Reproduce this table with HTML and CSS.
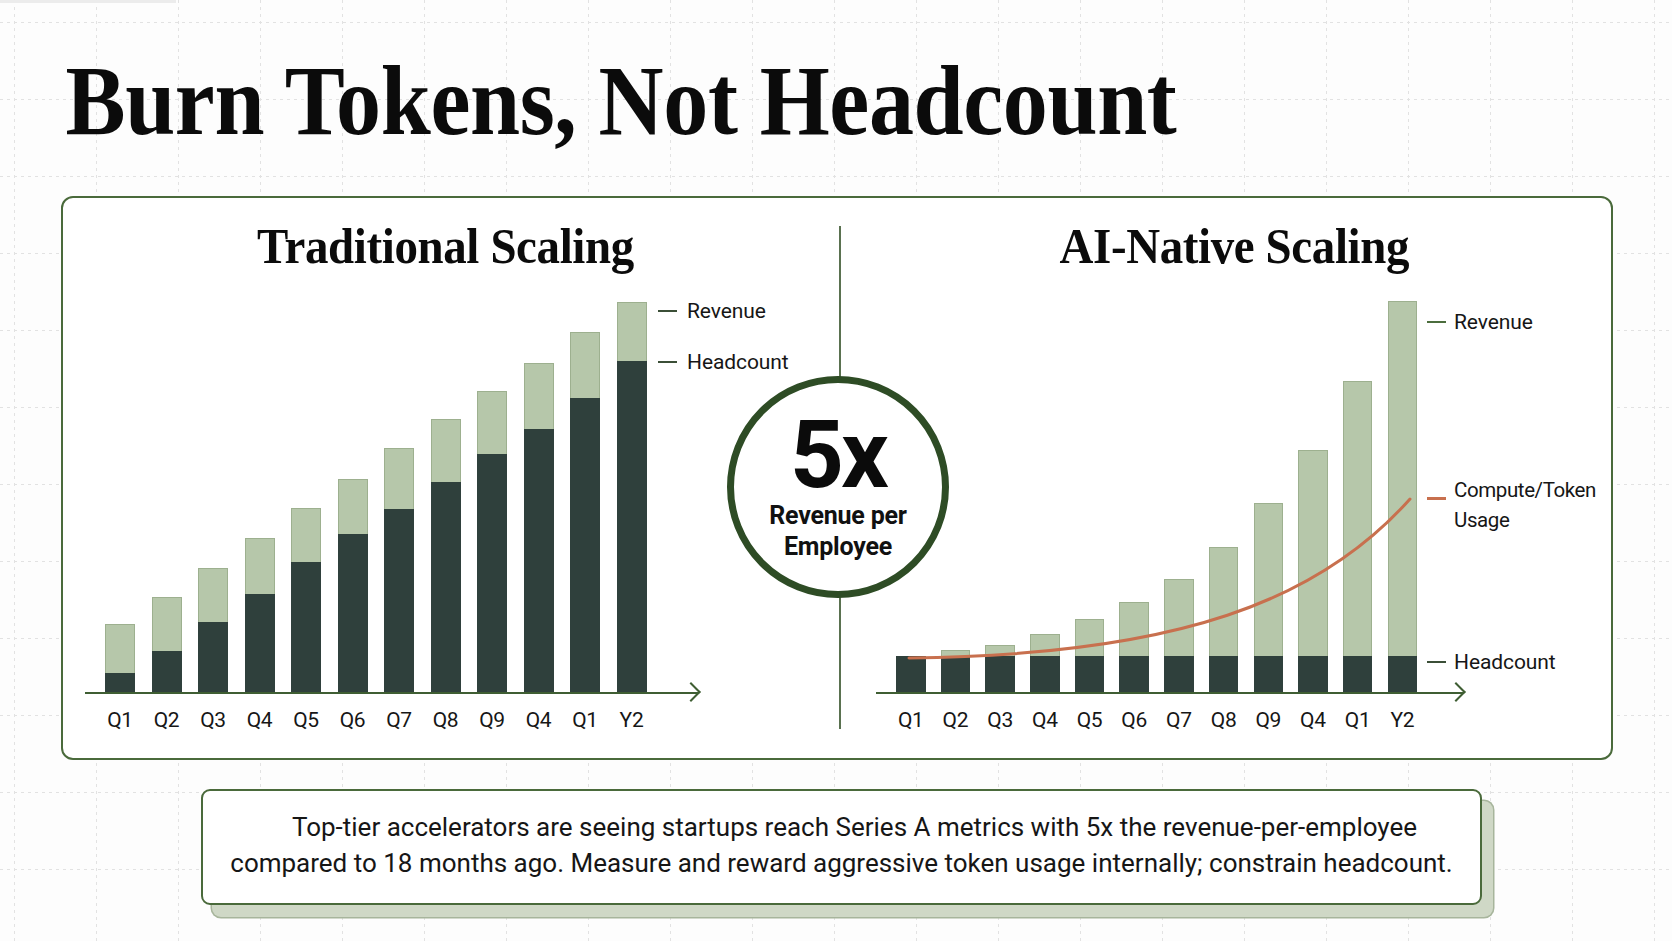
FILE: index.html
```html
<!DOCTYPE html>
<html lang="en">
<head>
<meta charset="utf-8">
<title>Burn Tokens, Not Headcount</title>
<link rel="stylesheet" href="styles.css">
</head>
<body>
<div class="slide">
  <div class="corner"></div>
  <h1 class="title">Burn Tokens, Not Headcount</h1>

  <section class="card">
    <div class="panel panel-left">
      <h2 class="heading">Traditional Scaling</h2>
      <div class="plot">
        <div class="bar" style="height:68px"><div class="bar-dark" style="height:19px"></div></div>
        <div class="bar" style="height:95px"><div class="bar-dark" style="height:41px"></div></div>
        <div class="bar" style="height:124px"><div class="bar-dark" style="height:70px"></div></div>
        <div class="bar" style="height:154px"><div class="bar-dark" style="height:98px"></div></div>
        <div class="bar" style="height:184px"><div class="bar-dark" style="height:130px"></div></div>
        <div class="bar" style="height:213px"><div class="bar-dark" style="height:158px"></div></div>
        <div class="bar" style="height:244px"><div class="bar-dark" style="height:183px"></div></div>
        <div class="bar" style="height:273px"><div class="bar-dark" style="height:210px"></div></div>
        <div class="bar" style="height:301px"><div class="bar-dark" style="height:238px"></div></div>
        <div class="bar" style="height:329px"><div class="bar-dark" style="height:263px"></div></div>
        <div class="bar" style="height:360px"><div class="bar-dark" style="height:294px"></div></div>
        <div class="bar" style="height:390px"><div class="bar-dark" style="height:331px"></div></div>
        <div class="legend-item" style="bottom:368px"><span class="dash"></span><span>Revenue</span></div>
        <div class="legend-item" style="bottom:317px"><span class="dash"></span><span>Headcount</span></div>
      </div>
      <div class="labels">
        <span>Q1</span><span>Q2</span><span>Q3</span><span>Q4</span><span>Q5</span><span>Q6</span>
        <span>Q7</span><span>Q8</span><span>Q9</span><span>Q4</span><span>Q1</span><span>Y2</span>
      </div>
    </div>

    <div class="divider"></div>

    <div class="panel panel-right">
      <h2 class="heading">AI-Native Scaling</h2>
      <div class="plot">
        <div class="bar" style="height:36px"><div class="bar-dark" style="height:36px"></div></div>
        <div class="bar" style="height:42px"><div class="bar-dark" style="height:36px"></div></div>
        <div class="bar" style="height:47px"><div class="bar-dark" style="height:36px"></div></div>
        <div class="bar" style="height:58px"><div class="bar-dark" style="height:36px"></div></div>
        <div class="bar" style="height:73px"><div class="bar-dark" style="height:36px"></div></div>
        <div class="bar" style="height:90px"><div class="bar-dark" style="height:36px"></div></div>
        <div class="bar" style="height:113px"><div class="bar-dark" style="height:36px"></div></div>
        <div class="bar" style="height:145px"><div class="bar-dark" style="height:36px"></div></div>
        <div class="bar" style="height:189px"><div class="bar-dark" style="height:36px"></div></div>
        <div class="bar" style="height:242px"><div class="bar-dark" style="height:36px"></div></div>
        <div class="bar" style="height:311px"><div class="bar-dark" style="height:36px"></div></div>
        <div class="bar" style="height:391px"><div class="bar-dark" style="height:36px"></div></div>
        <svg class="curve" viewBox="0 0 588 416" width="588" height="416" aria-hidden="true">
          <path d="M33 382 C304 379 444 324 534 223" fill="none" stroke="#c8704e" stroke-width="3" stroke-linecap="round"/>
        </svg>
        <div class="legend-item" style="bottom:357px"><span class="dash dash-green"></span><span>Revenue</span></div>
        <div class="legend-item legend-multi" style="bottom:157px"><span class="dash dash-orange"></span><span>Compute/Token<br>Usage</span></div>
        <div class="legend-item" style="bottom:17px"><span class="dash"></span><span>Headcount</span></div>
      </div>
      <div class="labels">
        <span>Q1</span><span>Q2</span><span>Q3</span><span>Q4</span><span>Q5</span><span>Q6</span>
        <span>Q7</span><span>Q8</span><span>Q9</span><span>Q4</span><span>Q1</span><span>Y2</span>
      </div>
    </div>

    <div class="badge">
      <div class="badge-num">5x</div>
      <div class="badge-text">Revenue per<br>Employee</div>
    </div>
  </section>

  <div class="note">
    <p>Top-tier accelerators are seeing startups reach Series A metrics with 5x the revenue-per-employee<br>compared to 18 months ago. Measure and reward aggressive token usage internally; constrain headcount.</p>
  </div>
</div>
</body>
</html>
```

FILE: styles.css
```css
* { box-sizing: border-box; }

html, body {
  margin: 0;
  padding: 0;
  background: #fdfdfd;
}

body {
  width: 1672px;
  height: 941px;
  overflow: hidden;
  font-family: Roboto, "Liberation Sans", Arial, sans-serif;
  color: #141414;
}

.slide {
  position: relative;
  width: 1672px;
  height: 941px;
  padding: 51px 0 0 61px;
}

.slide::before,
.slide::after {
  content: "";
  position: absolute;
  inset: 0;
  pointer-events: none;
}

.slide::before {
  background-image: linear-gradient(to right, #e2e2e2 1px, transparent 1px);
  background-size: 82px 100%;
  background-position: 14px 0;
  -webkit-mask-image: repeating-linear-gradient(to bottom, #000 0 3px, transparent 3px 7px);
  mask-image: repeating-linear-gradient(to bottom, #000 0 3px, transparent 3px 7px);
}

.slide::after {
  background-image: linear-gradient(to bottom, #e2e2e2 1px, transparent 1px);
  background-size: 100% 77px;
  background-position: 0 22px;
  -webkit-mask-image: repeating-linear-gradient(to right, #000 0 3px, transparent 3px 7px);
  mask-image: repeating-linear-gradient(to right, #000 0 3px, transparent 3px 7px);
}

.slide > * {
  position: relative;
  z-index: 1;
}

.corner {
  position: absolute;
  left: 0;
  top: 0;
  width: 176px;
  height: 3px;
  background: #ececec;
}

.title {
  margin: 0;
  padding-left: 5px;
  font-family: "Liberation Serif", "Times New Roman", serif;
  font-weight: 700;
  font-size: 100px;
  line-height: 100px;
  letter-spacing: -0.4px;
  color: #0b0b0b;
  transform: scaleX(0.9);
  transform-origin: 0 50%;
  white-space: nowrap;
}

/* ---------- main card ---------- */
.card {
  position: relative;
  margin-top: 45px;
  width: 1552px;
  height: 564px;
  border: 2px solid #4a6a3b;
  border-radius: 12px;
  background: #ffffff;
  display: flex;
}

.panel {
  display: flex;
  flex-direction: column;
}

.panel-left {
  width: 776px;
  padding-left: 21.5px;
}

.panel-right {
  flex: 1;
  padding-left: 35px;
}

.divider {
  width: 2px;
  margin: 28px 0 29px;
  background: #5a7150;
}

.heading {
  margin: 0;
  padding-top: 18px;
  font-family: "Liberation Serif", "Times New Roman", serif;
  font-weight: 700;
  font-size: 51px;
  line-height: 60px;
  letter-spacing: -0.4px;
  text-align: center;
  color: #0b0b0b;
  transform: scaleX(0.92);
}

.panel-left .heading {
  margin-left: -21.5px;
  padding-right: 12px;
}

.panel-right .heading {
  margin-left: -35px;
  padding-left: 18px;
}

/* ---------- plots ---------- */
.plot {
  position: relative;
  height: 418px;
  display: flex;
  align-items: flex-end;
  border-bottom: 2px solid #3f5e33;
}

.panel-left .plot {
  width: 614.5px;
  padding-left: 20.5px;
  gap: 16.5px;
}

.panel-right .plot {
  width: 588px;
  padding-left: 20px;
  gap: 15.2px;
}

.plot::after {
  content: "";
  position: absolute;
  right: 1.5px;
  bottom: -7px;
  width: 12px;
  height: 12px;
  border-top: 2.5px solid #3f5e33;
  border-right: 2.5px solid #3f5e33;
  transform: rotate(45deg);
}

.bar {
  flex: 0 0 30px;
  display: flex;
  flex-direction: column;
  justify-content: flex-end;
  background: #b6c7aa;
  box-shadow: inset 0 0 0 1px #9db08f;
}

.panel-right .bar {
  flex-basis: 29.5px;
}

.bar-dark {
  background: #2f403c;
}

.curve {
  position: absolute;
  left: 0;
  top: 0;
  overflow: visible;
}

.legend-item {
  position: absolute;
  display: flex;
  align-items: center;
  gap: 10px;
  height: 26px;
  font-size: 21px;
  line-height: 26px;
  letter-spacing: -0.1px;
  color: #161616;
  white-space: nowrap;
}

.panel-left .legend-item { left: 573.5px; }
.panel-right .legend-item { left: 551px; gap: 8px; }

.legend-multi {
  height: auto;
  align-items: flex-start;
  line-height: 30px;
  font-size: 20.5px;
  letter-spacing: -0.4px;
}

.legend-multi .dash {
  margin-top: 22px;
}

.dash {
  flex: 0 0 19px;
  height: 2.5px;
  background: #3b4f37;
}

.dash-green { background: #4b6d3d; }
.dash-orange { background: #c8704e; }

.labels {
  display: flex;
  padding-top: 13px;
  font-size: 21px;
  line-height: 26px;
  letter-spacing: -0.3px;
  color: #161616;
}

.panel-left .labels {
  padding-left: 20.5px;
  gap: 16.5px;
}

.panel-right .labels {
  padding-left: 20px;
  gap: 15.2px;
}

.labels span {
  flex: 0 0 30px;
  display: flex;
  justify-content: center;
}

.panel-right .labels span {
  flex-basis: 29.5px;
}

/* ---------- 5x badge ---------- */
.badge {
  position: absolute;
  left: 664px;
  top: 178px;
  width: 222px;
  height: 222px;
  border: 7px solid #2e4c25;
  border-radius: 50%;
  background: #ffffff;
  display: flex;
  flex-direction: column;
  align-items: center;
  justify-content: center;
  text-align: center;
  z-index: 2;
}

.badge-num {
  font-weight: 700;
  font-size: 94px;
  line-height: 84px;
  letter-spacing: -3px;
  margin-bottom: 3px;
  color: #0b0b0b;
}

.badge-text {
  font-weight: 700;
  font-size: 25px;
  line-height: 31px;
  letter-spacing: -0.2px;
  color: #111111;
}

/* ---------- bottom note ---------- */
.note {
  margin: 29px 0 0 140px;
  width: 1281px;
  height: 116px;
  border: 2px solid #4a6a3b;
  border-radius: 9px;
  background: #ffffff;
  box-shadow: 11px 12px 0 0 #cfd8c6, 11px 12px 0 1.5px #a7b59c;
}

.note p {
  margin: 0;
  padding-top: 18px;
  font-size: 26px;
  line-height: 36px;
  letter-spacing: 0;
  text-align: center;
  text-indent: 26px;
  color: #161616;
  white-space: nowrap;
}
```
